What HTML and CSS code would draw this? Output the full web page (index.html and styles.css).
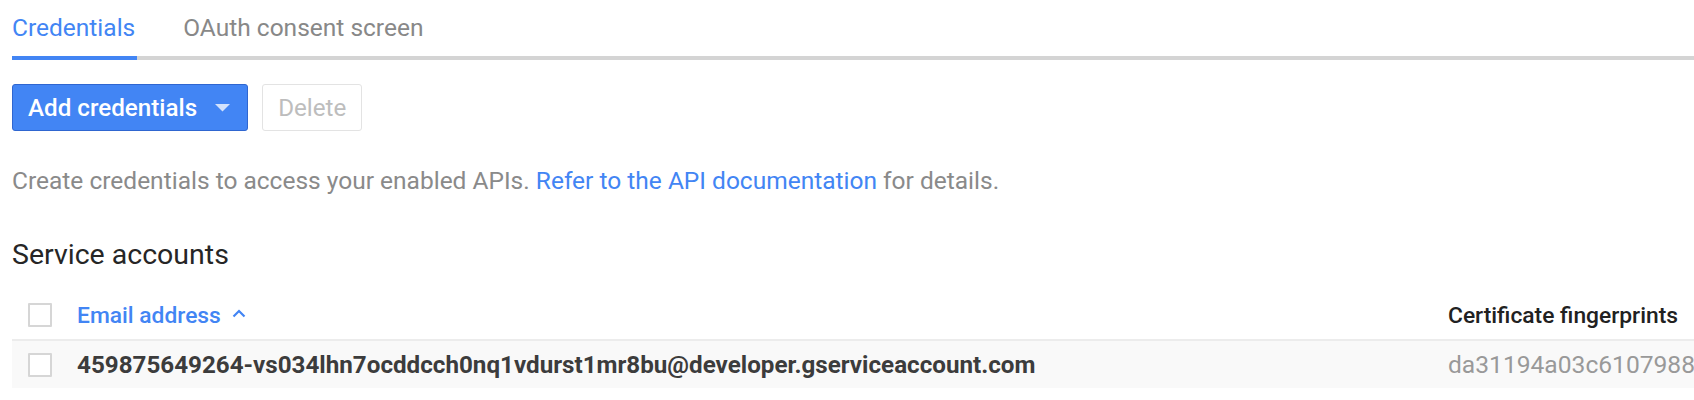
FILE: index.html
```html
<!DOCTYPE html>
<html lang="en">
<head>
<meta charset="utf-8">
<title>Credentials</title>
<link rel="stylesheet" href="styles.css">
</head>
<body>
<div class="page">
  <nav class="tabs">
    <a class="tab tab-active">Credentials</a>
    <a class="tab">OAuth consent screen</a>
  </nav>

  <div class="toolbar">
    <button class="btn btn-primary">
      <span>Add credentials</span>
      <svg class="caret" width="15" height="8" viewBox="0 0 15 8"><path d="M0 0 L15 0 L7.5 7.5 Z" fill="#d2e2fc"/></svg>
    </button>
    <button class="btn btn-disabled">Delete</button>
  </div>

  <p class="desc">Create credentials to access your enabled APIs. <a class="link">Refer to the API documentation</a> for details.</p>

  <h2 class="section-title">Service accounts</h2>

  <table class="grid">
    <colgroup>
      <col class="c-check">
      <col class="c-email">
      <col class="c-fp">
    </colgroup>
    <thead>
      <tr class="head-row">
        <th class="cell-check"><span class="checkbox"></span></th>
        <th class="th-email"><span>Email address</span><svg class="sort" width="14" height="9" viewBox="0 0 14 9"><path d="M1.5 7.5 L7 2 L12.5 7.5" fill="none" stroke="#4285f4" stroke-width="2.2"/></svg></th>
        <th class="th-fp">Certificate fingerprints</th>
      </tr>
    </thead>
    <tbody>
      <tr class="data-row">
        <td class="cell-check"><span class="checkbox"></span></td>
        <td class="td-email">459875649264-vs034lhn7ocddcch0nq1vdurst1mr8bu@developer.gserviceaccount.com</td>
        <td class="td-fp">da31194a03c6107988</td>
      </tr>
    </tbody>
  </table>
</div>
</body>
</html>
```

FILE: styles.css
```css
html, body {
  margin: 0;
  padding: 0;
  background: #ffffff;
  overflow: hidden;
}

body {
  font-family: Roboto, "Liberation Sans", Arial, sans-serif;
  color: #212121;
}

.page {
  padding: 14px 0 0 12px;
}

.tabs {
  display: flex;
  gap: 46px;
  border-bottom: 4px solid #d4d4d4;
}

.tab {
  font-size: 24.5px;
  line-height: 28px;
  color: #888888;
  padding-bottom: 14px;
  margin-bottom: -4px;
  border-bottom: 4px solid transparent;
}

.tab-active {
  color: #4285f4;
  border-bottom-color: #4285f4;
  padding-right: 2px;
}

.toolbar {
  display: flex;
  gap: 14px;
  margin-top: 24px;
}

.btn {
  font-family: inherit;
  font-size: 24.2px;
  font-weight: 500;
  height: 47px;
  border-radius: 3px;
  box-sizing: border-box;
  display: flex;
  align-items: center;
  padding: 0 15px;
}

.btn-primary {
  background: #4285f4;
  border: 1px solid #2f66d0;
  color: #ffffff;
  gap: 18px;
  padding-right: 17px;
}

.caret {
  display: block;
  margin-top: 1px;
}

.btn-disabled {
  background: #ffffff;
  border: 1px solid #e3e3e3;
  color: #bdbdbd;
  font-weight: 400;
}

.desc {
  margin: 36px 0 0 0;
  font-size: 24.5px;
  line-height: 28px;
  color: #8a8a8a;
}

.link {
  color: #4285f4;
}

.section-title {
  margin: 44px 0 0 0;
  font-size: 28.5px;
  line-height: 32px;
  font-weight: 400;
  color: #262626;
}

.grid {
  margin-top: 20px;
  border-collapse: collapse;
  table-layout: fixed;
  width: 2100px;
}

.c-check { width: 65px; }
.c-email { width: 1371px; }
.c-fp { width: 664px; }

.grid th, .grid td {
  padding: 0;
  text-align: left;
  white-space: nowrap;
  overflow: hidden;
}

.cell-check {
  padding-left: 16px !important;
}

.checkbox {
  display: block;
  width: 24px;
  height: 24px;
  box-sizing: border-box;
  border: 2px solid #d6d6d6;
  border-radius: 1px;
  background: #ffffff;
}

.head-row {
  height: 49px;
}

.head-row th {
  font-size: 22.8px;
  font-weight: 500;
  vertical-align: middle;
}

.th-email {
  color: #4285f4;
}

.th-email span,
.th-email .sort {
  display: inline-block;
  vertical-align: middle;
}

.sort {
  margin-left: 11px;
  margin-top: -4px;
}

.th-fp {
  color: #212121;
}

.data-row {
  height: 48px;
  background: #f9f9f9;
  border-top: 2px solid #ececec;
}

.data-row td {
  font-size: 24.2px;
  line-height: 28px;
  vertical-align: middle;
}

.td-email {
  font-weight: 700;
  color: #3c3c3c;
}

.grid .td-fp {
  color: #999999;
  font-size: 24.6px;
}
```
